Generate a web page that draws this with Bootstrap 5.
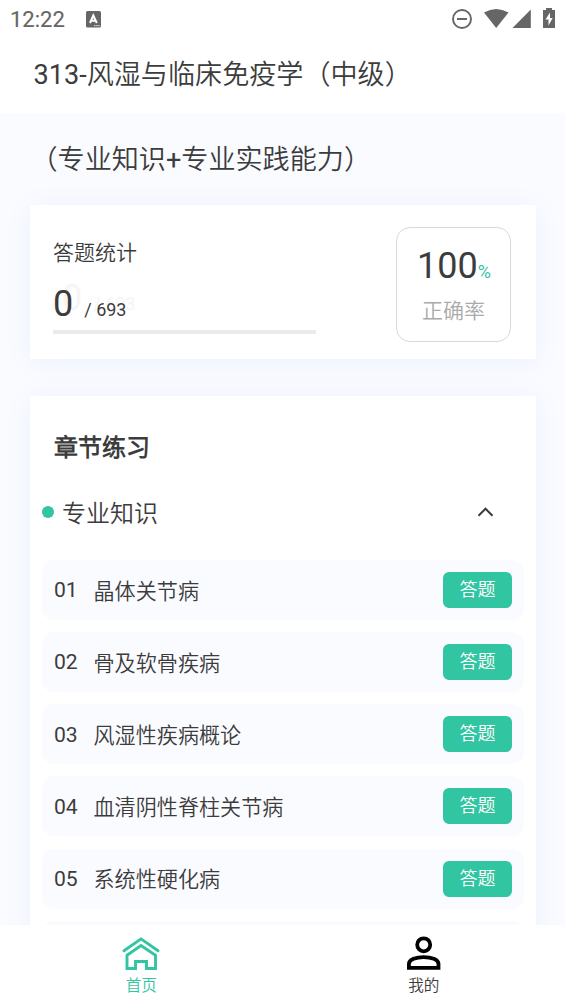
<!DOCTYPE html>
<html lang="zh-CN">
<head>
<meta charset="utf-8">
<meta name="viewport" content="width=device-width, initial-scale=1">
<title>313-风湿与临床免疫学（中级）</title>
<link rel="stylesheet" href="https://cdn.jsdelivr.net/npm/bootstrap@5.3.0/dist/css/bootstrap.min.css">
<style>
  :root { --brand: #32c5a1; --ink: #3c3c3c; --soft: #fafbff; }
  body { font-family: Roboto, "Noto Sans CJK SC DemiLight", "Noto Sans CJK SC", sans-serif; color: var(--ink); background: var(--soft); line-height: 1.2; }
  svg { display: block; flex: none; }
  .status-bar { height: 38px; padding: 0 9px 0 10px; color: #666; font-size: 22px; }
  .clock { -webkit-text-stroke: .15px #666; padding-top: 2px; }
  .input-icon { margin-left: 21px; }
  .page-title { height: 75px; padding: 0 0 0 33.5px; font-size: 27.1px; }
  .sub-title { height: 92px; padding: 2px 0 0 30.5px; font-size: 27.1px; }
  .panel { margin: 0 29px 0 30px; background: #fff; box-shadow: 0 3px 24px rgba(50, 130, 245, .08); }
  .stats { height: 154px; padding: 22px 25px 0 23px; }
  .stats-left { width: 263px; }
  .stats-label { font-size: 21px; line-height: 30px; margin-top: 11px; }
  .count { font-size: 36px; line-height: 42px; height: 42px; margin-top: 15px; }
  .count span { font-size: 18px; margin-left: 11px; }
  .count-ghost { left: 9px; top: -6px; color: #f5f5f5; }
  .track { height: 4px; margin-top: 5px; background: #ebebeb; border-radius: 0; }
  .rate { width: 115px; height: 115px; border: 1px solid #d9d9d9; border-radius: 14px; }
  .rate-num { font-size: 36px; line-height: 42px; margin-top: 17px; padding-left: 1px; }
  .rate-num small { font-size: 18px; color: var(--brand); }
  .rate-label { font-size: 21px; line-height: 30px; color: #aaa; margin-top: 3px; }
  .chapters { margin-top: 37px; padding: 0 12px; }
  .chapters h1 { font-size: 24px; line-height: 36px; margin: 0; padding: 34px 0 0 12px; }
  .section-head { height: 60px; margin: 16px 0 18px; font-size: 24px; padding-right: 30px; }
  .section-head span { padding-top: 5px; }
  .bullet { width: 12px; height: 12px; border-radius: 50%; background: var(--brand); margin-right: 8px; }
  .topic { height: 60px; flex: none; margin-bottom: 12.15px; padding: 0 12px; font-size: 21.1px; background: var(--soft); border-radius: 12px; }
  .topic-no { width: 39.5px; }
  .topic-name { padding-top: 3px; }
  .btn-answer { --bs-btn-color: #fff; --bs-btn-bg: var(--brand); --bs-btn-hover-color: #fff; --bs-btn-hover-bg: #29ad8d; width: 69px; height: 36px; padding: 0; border: 0; border-radius: 6px; font-size: 18px; line-height: 34px; }
  .tab-bar { height: 79px; background: #fff; font-size: 15.6px; z-index: 2; }
  .tab-bar a { color: var(--ink); padding-top: 10px; }
  .tab-bar a.active { color: var(--brand); }
  .tab-bar span { line-height: 20px; margin-top: 5px; }
</style>
</head>
<body>
<div class="vh-100 d-flex flex-column overflow-hidden">
  <header class="bg-white flex-shrink-0">
    <div class="status-bar d-flex align-items-center">
      <span class="clock">12:22</span>
      <svg class="input-icon" width="15" height="17" viewBox="0 0 15 17"><rect width="15" height="16.500" rx="1.500" fill="#666"/><path d="M4 12 7.300 4.500 10.800 12M5.200 9.800h4.400" fill="none" stroke="#fff" stroke-width="2"/><path d="M8 14.600h6" stroke="#ccc" stroke-width="1.200" stroke-dasharray="1.500 .600"/></svg>
      <svg class="ms-auto" width="104" height="22" viewBox="452 8 104 22" fill="#666">
        <circle cx="462" cy="19" r="9" fill="none" stroke="#666" stroke-width="1.900"/><path d="M457 18h10v2h-10z"/>
        <path d="M484 12.500Q496 5.500 508.500 12.500L496.200 28Z"/>
        <path d="M530.800 9.500V28H512.500Z"/>
        <path d="M546 8h6v2h3v18h-12V10h3z"/><path fill="#fff" d="M550 12.500 545.500 19.500h3v6l4.200-7.500H550z"/>
      </svg>
    </div>
    <div class="page-title d-flex align-items-center text-nowrap">313-风湿与临床免疫学（中级）</div>
  </header>

  <main class="flex-grow-1 overflow-hidden" style="min-height:0">
    <div class="sub-title d-flex align-items-center text-nowrap">（专业知识+专业实践能力）</div>

    <section class="panel stats d-flex justify-content-between">
      <div class="stats-left">
        <div class="stats-label">答题统计</div>
        <div class="count position-relative">
          <div class="count-ghost position-absolute text-nowrap" aria-hidden="true">0<span>/ 693</span></div>
          <div class="position-relative">0<span>/ 693</span></div>
        </div>
        <div class="progress track"></div>
      </div>
      <div class="rate text-center">
        <div class="rate-num">100<small>%</small></div>
        <div class="rate-label">正确率</div>
      </div>
    </section>

    <section class="panel chapters">
      <h1 class="fw-bold">章节练习</h1>
      <div class="section-head d-flex align-items-center">
        <i class="bullet"></i><span>专业知识</span>
        <svg class="ms-auto" width="17" height="10" viewBox="0 0 17 10" fill="none" stroke="#3c3c3c" stroke-width="2"><path d="M1.500 8.700 8.500 1.700l7 7"/></svg>
      </div>
      <div class="d-flex flex-column">
        <div class="topic d-flex align-items-center"><span class="topic-no">01</span><span class="topic-name">晶体关节病</span><button class="btn btn-answer ms-auto">答题</button></div>
        <div class="topic d-flex align-items-center"><span class="topic-no">02</span><span class="topic-name">骨及软骨疾病</span><button class="btn btn-answer ms-auto">答题</button></div>
        <div class="topic d-flex align-items-center"><span class="topic-no">03</span><span class="topic-name">风湿性疾病概论</span><button class="btn btn-answer ms-auto">答题</button></div>
        <div class="topic d-flex align-items-center"><span class="topic-no">04</span><span class="topic-name">血清阴性脊柱关节病</span><button class="btn btn-answer ms-auto">答题</button></div>
        <div class="topic d-flex align-items-center"><span class="topic-no">05</span><span class="topic-name">系统性硬化病</span><button class="btn btn-answer ms-auto">答题</button></div>
        <div class="topic"></div>
      </div>
    </section>
  </main>

  <nav class="tab-bar d-flex flex-shrink-0">
    <a class="active col-6 d-flex flex-column align-items-center text-decoration-none" href="#">
      <svg width="40" height="36" viewBox="121 935 40 36" fill="none" stroke="currentColor"><path d="M124 950.800 141 938.900l17 11.900" stroke-width="2.900" stroke-linecap="round"/><path d="M127 955.200 141 945.600l14.500 9.600v13.300h-9v-7h-11v7H127z" stroke-width="2.900"/></svg>
      <span>首页</span>
    </a>
    <a class="col-6 d-flex flex-column align-items-center text-decoration-none" href="#">
      <svg width="36" height="36" viewBox="406 935 36 36" fill="none" stroke="#000" stroke-width="3.800"><circle cx="423.700" cy="944.800" r="6.500"/><path d="M408.900 967.800V964c0-4.500 7.500-6.900 14.800-6.900s14.800 2.400 14.800 6.900v3.800z"/></svg>
      <span>我的</span>
    </a>
  </nav>
</div>
<script src="https://cdn.jsdelivr.net/npm/bootstrap@5.3.0/dist/js/bootstrap.bundle.min.js"></script>
</body>
</html>
